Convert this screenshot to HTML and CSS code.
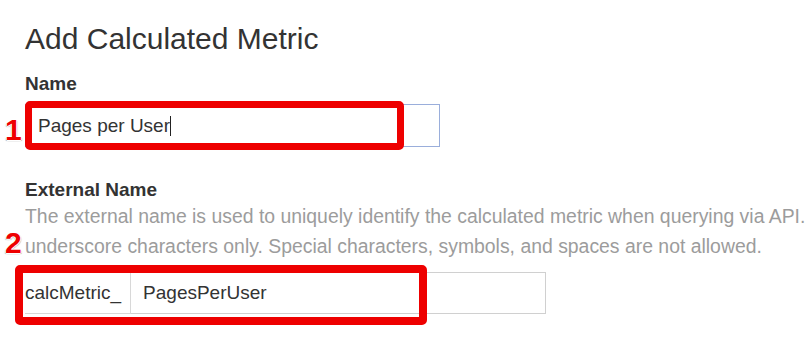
FILE: index.html
```html
<!DOCTYPE html>
<html lang="en">
<head>
<meta charset="utf-8">
<title>Add Calculated Metric</title>
<link rel="stylesheet" href="styles.css">
</head>
<body>
<div class="page">
  <h1 class="title">Add Calculated Metric</h1>

  <div class="field">
    <div class="label">Name</div>
    <div class="control control-focused"><span class="caret-text">Pages per User</span></div>
  </div>

  <div class="field field-ext">
    <div class="label">External Name</div>
    <p class="help">The external name is used to uniquely identify the calculated metric when querying via API.<br>underscore characters only. Special characters, symbols, and spaces are not allowed.</p>
    <div class="group">
      <span class="addon">calcMetric_</span>
      <span class="group-input">PagesPerUser</span>
    </div>
  </div>

  <div class="callout callout-1"></div>
  <div class="callout callout-2"></div>
  <span class="marker marker-1">1</span>
  <span class="marker marker-2">2</span>
</div>
</body>
</html>
```
FILE: styles.css
```css
html, body {
  margin: 0;
  padding: 0;
  background: #ffffff;
  overflow: hidden;
}

body {
  font-family: "Liberation Sans", Arial, sans-serif;
  color: #333333;
}

.page {
  position: relative;
  width: 810px;
  height: 347px;
  padding-left: 25px;
  box-sizing: border-box;
  overflow: hidden;
}

.title {
  margin: 22px 0 0 0;
  font-size: 30px;
  line-height: 33px;
  font-weight: normal;
  color: #333333;
}

.field {
  margin-top: 18px;
}

.field-ext {
  margin-top: 32px;
}

.label {
  font-size: 19px;
  line-height: 22px;
  font-weight: bold;
  color: #333333;
}

.control {
  margin-top: 9px;
  width: 415px;
  height: 43px;
  box-sizing: border-box;
  border: 1px solid #c9c9c9;
  padding-left: 12px;
  display: flex;
  align-items: center;
  font-size: 19px;
  color: #333333;
}

.control-focused {
  border-color: #9aaedb;
}

.caret-text {
  border-right: 1px solid #222222;
  line-height: 20px;
}

.help {
  margin: 0;
  font-size: 19.4px;
  line-height: 30px;
  color: #9c9c9c;
  white-space: nowrap;
}

.group {
  margin-top: 11px;
  display: flex;
  width: 521px;
  height: 42px;
  font-size: 19px;
  color: #333333;
}

.addon {
  display: flex;
  align-items: center;
  padding-right: 9px;
  border-right: 1px solid #d8d8d8;
  border-top: 1px solid #d8d8d8;
  border-bottom: 1px solid #d8d8d8;
}

.group-input {
  flex: 1;
  display: flex;
  align-items: center;
  padding-left: 12px;
  border: 1px solid #d0d0d0;
  border-left: none;
}

.callout {
  position: absolute;
  box-sizing: border-box;
  border: 7px solid #ee0000;
  border-radius: 5px;
}

.callout-1 {
  left: 25px;
  top: 101px;
  width: 379px;
  height: 49px;
}

.callout-2 {
  left: 15px;
  top: 265px;
  width: 412px;
  height: 60px;
  border-width: 8px;
}

.marker {
  position: absolute;
  font-family: "Liberation Sans", Arial, sans-serif;
  font-weight: bold;
  font-size: 30px;
  line-height: 30px;
  color: #ee0000;
  text-shadow:
    -1px 0 0 #ffffff, 1px 0 0 #ffffff, 0 -1px 0 #ffffff, 0 1px 0 #ffffff,
    -1px 1px 1px #b0b0b0, 1px 1px 1px #b0b0b0;
}

.marker-1 {
  left: 5px;
  top: 115px;
}

.marker-2 {
  left: 5px;
  top: 228px;
}
```
